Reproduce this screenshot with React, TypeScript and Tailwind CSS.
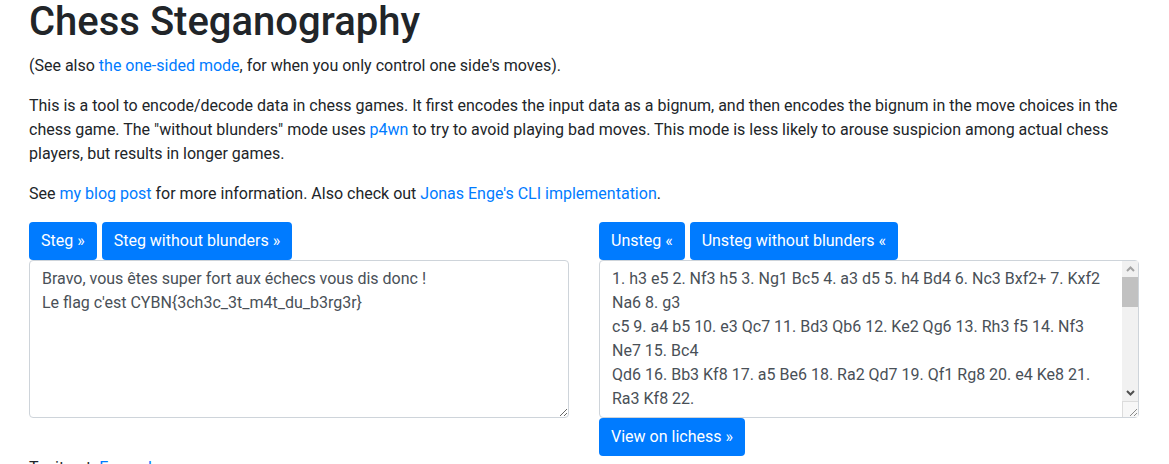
import React from 'react';

const font = { fontFamily: '"Segoe UI", Roboto, "Liberation Sans", sans-serif' };

const moves = [
	'1. h3 e5 2. Nf3 h5 3. Ng1 Bc5 4. a3 d5 5. h4 Bd4 6. Nc3 Bxf2+ 7. Kxf2',
	'Na6 8. g3',
	'c5 9. a4 b5 10. e3 Qc7 11. Bd3 Qb6 12. Ke2 Qg6 13. Rh3 f5 14. Nf3',
	'Ne7 15. Bc4',
	'Qd6 16. Bb3 Kf8 17. a5 Be6 18. Ra2 Qd7 19. Qf1 Rg8 20. e4 Ke8 21.',
	'Ra3 Kf8 22.',
	'',
	'Bc4 Rh7 23. Kg1 Ke8 24. Nd2 Kd8 25. Nf3 Kc8',
].join('\n');

const Btn = ({ children }: { children: React.ReactNode }) => (
	<button className="h-[38px] rounded-[4px] bg-[#007bff] px-3 text-[16px] leading-6 text-white">
		{children}
	</button>
);

const A = ({ children }: { children: React.ReactNode }) => (
	<a href="#" className="text-[#007bff] no-underline">
		{children}
	</a>
);

// windows-style scrollbar drawn over the textarea
const FakeScrollbar = () => (
	<div className="absolute top-[1px] right-[1px] bottom-[1px] flex w-[16px] flex-col bg-[#f1f1f1]">
		<div className="flex h-[16px] items-center justify-center">
			<svg width="9" height="6" viewBox="0 0 9 6">
				<path d="M1 5 L4.5 1.5 L8 5" fill="none" stroke="#a3a3a3" strokeWidth="2" />
			</svg>
		</div>
		<div className="h-[30px] bg-[#c1c1c1]" />
		<div className="flex-1" />
		<div className="flex h-[16px] items-center justify-center">
			<svg width="9" height="6" viewBox="0 0 9 6">
				<path d="M1 1 L4.5 4.5 L8 1" fill="none" stroke="#505050" strokeWidth="2" />
			</svg>
		</div>
		<div className="flex h-[16px] items-end justify-end border-t border-l border-[#dcdcdc] bg-[#f7f7f7]">
			<svg width="10" height="10" viewBox="0 0 10 10">
				<path d="M9 2 L2 9 M9 6 L6 9" stroke="#8a8a8a" strokeWidth="1" />
			</svg>
		</div>
	</div>
);

export default function App() {
	return (
		<main
			className="h-[464px] w-[1169px] overflow-hidden bg-white px-[29px] text-[16px] leading-6 text-[#212529]"
			style={font}
		>
			<h1 className="mt-[-2px] mb-2 text-[40px] font-medium leading-[48px]">
				Chess Steganography
			</h1>
			<p className="mb-4">
				(See also <A>the one-sided mode</A>, for when you only control one
				side's moves).
			</p>
			<p className="mb-4">
				This is a tool to encode/decode data in chess games. It first encodes
				the input data as a bignum, and then encodes the bignum in the move
				choices in the
				<br />
				chess game. The "without blunders" mode uses <A>p4wn</A> to try to
				avoid playing bad moves. This mode is less likely to arouse suspicion
				among actual chess
				<br />
				players, but results in longer games.
			</p>
			<p className="mb-4">
				See <A>my blog post</A> for more information. Also check out{' '}
				<A>Jonas Enge's CLI implementation</A>.
			</p>
			<div className="grid grid-cols-[540px_540px] gap-[30px]">
				<div>
					<div className="flex gap-[5px]">
						<Btn>Steg »</Btn>
						<Btn>Steg without blunders »</Btn>
					</div>
					<textarea
						readOnly
						className="block h-[158px] w-full resize-y rounded-[4px] border border-[#ced4da] px-3 py-1.5 leading-6 text-[#495057] outline-none"
						defaultValue={
							"Bravo, vous êtes super fort aux échecs vous dis donc !\nLe flag c'est CYBN{3ch3c_3t_m4t_du_b3rg3r}"
						}
					/>
				</div>
				<div>
					<div className="flex gap-[5px]">
						<Btn>Unsteg «</Btn>
						<Btn>Unsteg without blunders «</Btn>
					</div>
					<div className="relative">
						<textarea
							readOnly
							className="block h-[158px] w-full resize-none overflow-hidden rounded-[4px] border border-[#ced4da] py-1.5 pr-[29px] pl-3 leading-6 text-[#495057] outline-none"
							defaultValue={moves}
						/>
						<FakeScrollbar />
					</div>
					<Btn>View on lichess »</Btn>
				</div>
			</div>
			<p>
				Try it out: <A>Example</A>
			</p>
		</main>
	);
}
